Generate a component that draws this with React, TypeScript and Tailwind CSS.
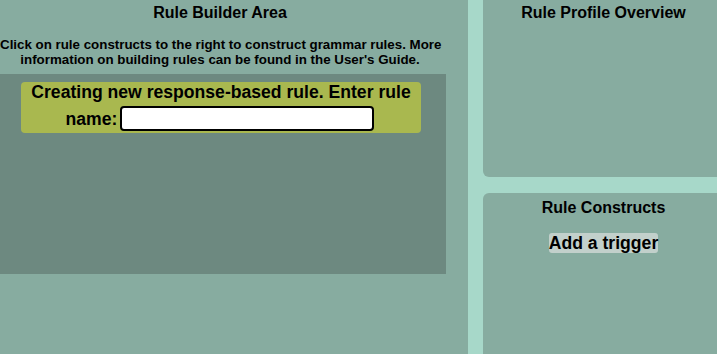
import React from "react";

export default function App() {
  const font = { fontFamily: '"Liberation Sans", Arial, sans-serif' };
  return (
    <div
      className="flex w-[717px] h-[354px] overflow-hidden bg-[#a7d8c9] text-black"
      style={font}
    >
      {/* Left column: Rule Builder Area */}
      <div className="w-[468px] h-full bg-[#87aca0] shrink-0">
        <div className="w-[440px] pt-[4px] text-center text-[16px] leading-[18px] font-bold">
          Rule Builder Area
        </div>
        <p className="w-[440px] mt-[15px] text-center text-[13.33px] leading-[15px] font-bold whitespace-nowrap">
          Click on rule constructs to the right to construct grammar rules. More
          <br />
          information on building rules can be found in the User's Guide.
        </p>
        <div className="w-[446px] h-[200px] mt-[7px] bg-[#6d8980] pt-[8px]">
          <div className="ml-[21px] w-[400px] h-[51px] rounded-[4px] bg-[#a9b84f] font-bold text-[17.6px]">
            <div className="h-[20px] leading-[20px] text-center whitespace-nowrap">
              Creating new response-based rule. Enter rule
            </div>
            <div className="flex items-center justify-center gap-[3px] pt-[4px] pl-[0px]">
              <span className="leading-[20px] -ml-[2px]">name:</span>
              <input
                type="text"
                className="w-[254px] h-[25px] bg-white border-2 border-black rounded-[4px] outline-none"
              />
            </div>
          </div>
        </div>
      </div>

      {/* Right column */}
      <div className="ml-[15px] flex-1 flex flex-col gap-[16px]">
        <div className="h-[177px] shrink-0 bg-[#87aca0] rounded-bl-[6px] pl-[7px]">
          <div className="pt-[4px] text-center text-[16px] leading-[18px] font-bold">
            Rule Profile Overview
          </div>
        </div>
        <div className="flex-1 bg-[#87aca0] rounded-tl-[6px] pl-[7px] flex flex-col items-center">
          <div className="pt-[6px] text-center text-[16px] leading-[18px] font-bold">
            Rule Constructs
          </div>
          <button className="mt-[16px] h-[20px] leading-[20px] px-0 bg-[#c2d0cb] rounded-[3px] text-[17.6px] font-bold text-black">
            Add a trigger
          </button>
        </div>
      </div>
    </div>
  );
}
